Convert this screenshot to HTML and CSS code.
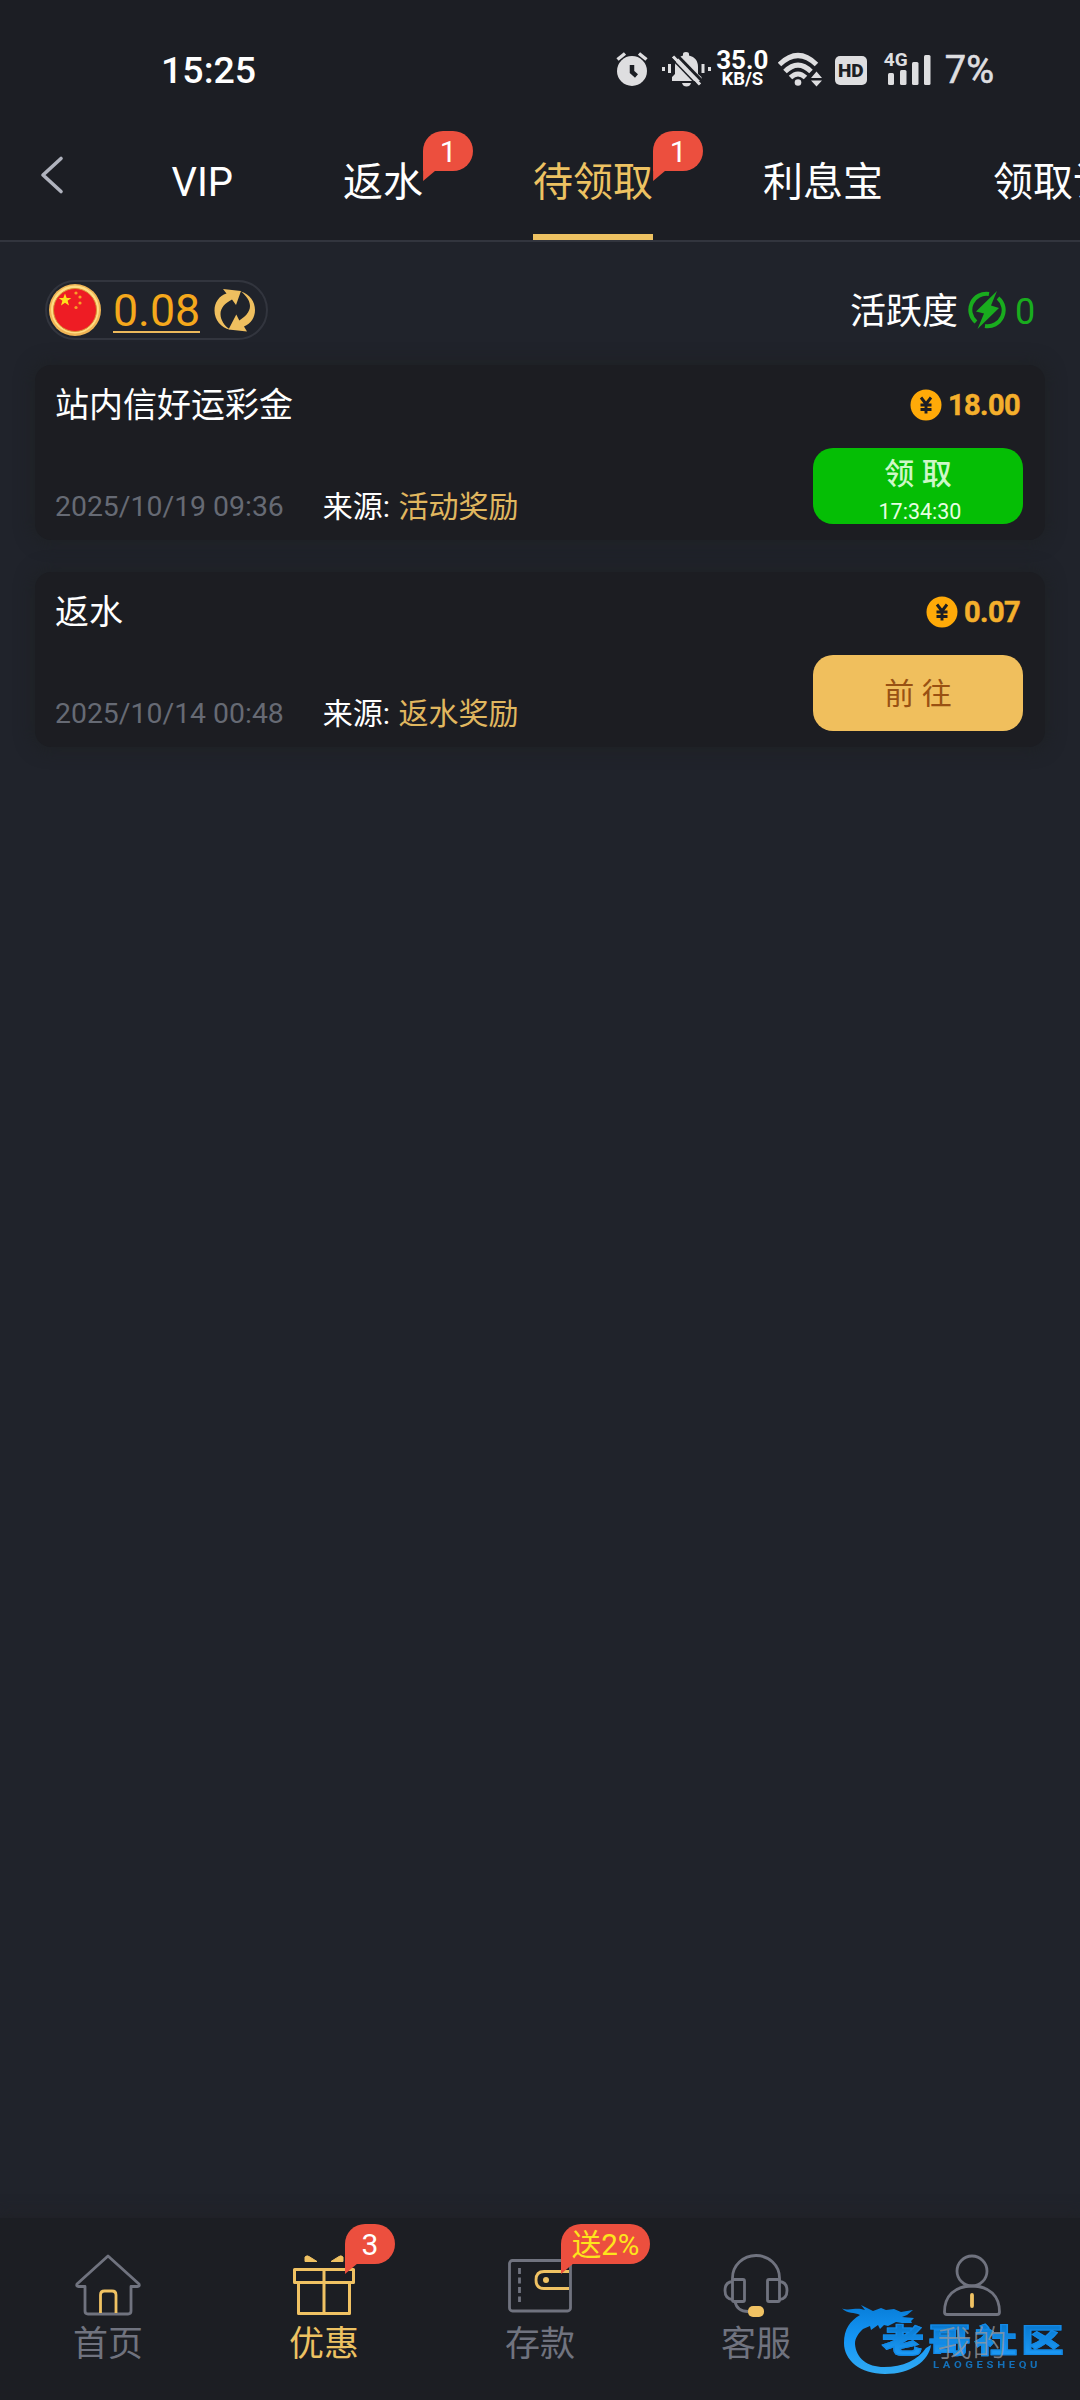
FILE: index.html
```html
<!DOCTYPE html>
<html lang="zh-CN">
<head>
<meta charset="utf-8">
<title>待领取</title>
<link rel="stylesheet" href="styles.css">
</head>
<body>
<div class="app">
  <header class="header">
    <div class="status">
      <span class="clock">15:25</span>
      <div class="status-icons">
        <svg class="i-alarm" width="32" height="36" viewBox="0 0 32 36"><circle cx="16" cy="20" r="15" fill="#dedee0"/><path d="M1.500 8.500L9 2.500M30.500 8.500L23 2.500" stroke="#dedee0" stroke-width="3.500"/><path d="M16 14v7l4.500 4" fill="none" stroke="#1c1e24" stroke-width="4.500"/></svg>
        <svg class="i-bell" width="49" height="36" viewBox="0 0 49 36"><g fill="#dedee0"><path d="M10 30v-4l3-3v-7c0-6 3-10 8-11.500V3q0-2 3-2t3 2v1.500C33 6 36 10 36 16v7l3.500 3v4z"/><path d="M20 32h9q-1 3.500-4.500 3.500T20 32z"/><path d="M6 13h3v9H6zM0 16h3v4H0zM39.500 13h3v9h-3zM46 16h3v4h-3z"/></g><path d="M14 3l28 29" stroke="#1c1e24" stroke-width="3"/><path d="M11 5.500l27 28" stroke="#dedee0" stroke-width="3.200"/><path d="M8.500 6.500l25 26" stroke="#1c1e24" stroke-width="1.500"/></svg>
        <div class="speed"><b>35.0</b><small>KB/S</small></div>
        <svg class="i-wifi" width="45" height="36" viewBox="0 0 45 36"><g fill="none" stroke="#dedee0" stroke-width="5"><path d="M1.500 13.500Q20-4.500 38.500 13.500"/><path d="M7 20.500Q20 7.500 33 20.500"/><path d="M12.500 26.500Q20 19.500 27.500 26.500"/></g><circle cx="20" cy="31.500" r="3.300" fill="#dedee0"/><path d="M33 27l5.500-6.500L44 27zM33 29.500h11L38.500 35.500z" fill="#dedee0"/></svg>
        <span class="hd">HD</span>
        <div class="signal">
          <svg width="48" height="34" viewBox="0 0 48 34" fill="#dedee0"><rect x="4" y="21" width="6" height="12" rx="1.500"/><rect x="16" y="18" width="6.500" height="15" rx="1.500"/><rect x="28" y="10" width="6.500" height="23" rx="1.500"/><rect x="40" y="3" width="6.500" height="30" rx="1.500"/></svg>
          <span class="net">4G</span>
        </div>
        <span class="battery">7%</span>
      </div>
    </div>
    <nav class="tabs">
      <svg class="back" width="24" height="40" viewBox="0 0 24 40"><path d="M21 3.500L3 20l18 16.500" fill="none" stroke="#b0b3be" stroke-width="3.600" stroke-linecap="round" stroke-linejoin="round"/></svg>
      <div class="tab-list">
        <span class="tab">VIP</span>
        <span class="tab">返水<i class="badge">1</i></span>
        <span class="tab active">待领取<i class="badge">1</i></span>
        <span class="tab">利息宝</span>
        <span class="tab">领取记录</span>
      </div>
    </nav>
  </header>

  <main class="main">
    <div class="summary">
      <div class="wallet">
        <svg width="54" height="54" viewBox="0 0 54 54"><circle cx="27" cy="27" r="26" fill="#f0b555"/><circle cx="27" cy="26.500" r="24" fill="#ffdd83"/><circle cx="27" cy="27" r="21.500" fill="#ee1c24" stroke="#d98d32" stroke-width="1"/><path d="M17 10.500l1.700 4.400h4.600l-3.700 2.900 1.400 4.600-4-2.700-4 2.700 1.400-4.600-3.700-2.900h4.600z" fill="#ffe01d"/><g fill="#f8a027"><circle cx="28" cy="10" r="1.600"/><circle cx="32" cy="14" r="1.600"/><circle cx="32" cy="20" r="1.600"/><circle cx="28" cy="24.500" r="1.600"/></g></svg>
        <span class="balance">0.08</span>
        <svg class="refresh" width="42" height="44" viewBox="0 0 42 44" fill="#efbf5f"><path d="M16 41.500C7 40 .5 32 .5 22.500.5 14.500 5 8 12.500 5.500L9 1l18 2-5 14-4-5.500C11 15 6.500 20 6.500 26c0 6 4 12 9.500 15.500z"/><path d="M27 3.500c9 3 14 10 14 18.500 0 7.500-4 13.500-11 16.500l3 5-18.500-2 7.800-15 3 6C31 29 36 24 36 18c0-5.500-4-10.500-9-14.500z"/></svg>
      </div>
      <div class="activity">
        <span>活跃度</span>
        <svg width="38" height="38" viewBox="0 0 38 38"><g fill="none" stroke="#19ac1e" stroke-width="4"><path d="M21 3A16 16 0 0 0 8 31"/><path d="M30 7a16 16 0 0 1-13 28"/></g><path d="M29 0L8 20.500l8 2L9.500 38 31 17l-8-2.500z" fill="#19ac1e"/></svg>
        <span class="points">0</span>
      </div>
    </div>

    <section class="card">
      <div class="row">
        <h2>站内信好运彩金</h2>
        <div class="amount"><svg width="32" height="32" viewBox="0 0 32 32"><circle cx="16" cy="16" r="15.500" fill="#ffaa08"/><path d="M11 8.500l5 6.500 5-6.500M10.500 16h11M10.500 20.500h11M16 15v9.500" fill="none" stroke="#1c1e24" stroke-width="2.900"/></svg><b>18.00</b></div>
      </div>
      <div class="row bottom">
        <div class="meta"><time>2025/10/19 09:36</time><span>来源: <em>活动奖励</em></span></div>
        <button class="btn claim"><span>领 取</span><small>17:34:30</small></button>
      </div>
    </section>

    <section class="card">
      <div class="row">
        <h2>返水</h2>
        <div class="amount"><svg width="32" height="32" viewBox="0 0 32 32"><circle cx="16" cy="16" r="15.500" fill="#ffaa08"/><path d="M11 8.500l5 6.500 5-6.500M10.500 16h11M10.500 20.500h11M16 15v9.500" fill="none" stroke="#1c1e24" stroke-width="2.900"/></svg><b>0.07</b></div>
      </div>
      <div class="row bottom">
        <div class="meta"><time>2025/10/14 00:48</time><span>来源: <em>返水奖励</em></span></div>
        <button class="btn go"><span>前 往</span></button>
      </div>
    </section>
  </main>

  <footer class="nav">
    <div class="item">
      <svg width="68" height="64" viewBox="0 0 68 64" fill="none" stroke="#70737f" stroke-width="2.800" stroke-linejoin="round"><path d="M34 3L3 31q-1 2.500 1.500 2.500H11V58q0 3 3 3h40q3 0 3-3V33.500h6.500Q66 33.500 65 31z"/><path d="M26.500 60V42q0-4 4-4h7.500q4 0 4 4v18" stroke="#f0c263"/></svg>
      <span>首页</span>
    </div>
    <div class="item active">
      <svg width="68" height="64" viewBox="0 0 68 64" fill="none" stroke="#f0c263" stroke-width="3" stroke-linejoin="round"><path d="M4.500 16.500h59v13h-59zM8.500 29.500h51v31h-51zM34 16.500v44"/><path d="M15 8.500V4q2-2 4-.5l8 5zM53 8.500V4q-2-2-4-.5l-8 5z" fill="#f0c263" stroke-width="1"/></svg>
      <i class="badge">3</i>
      <span>优惠</span>
    </div>
    <div class="item">
      <svg width="68" height="64" viewBox="0 0 68 64" fill="none" stroke="#70737f" stroke-width="2.800"><rect x="3.500" y="7.500" width="61" height="50.500" rx="3"/><path d="M13.500 15v34" stroke-dasharray="6 3.500"/><path d="M63 18.500H38q-8 0-8 8.500t8 8.500h25" stroke="#f0c263"/><circle cx="40" cy="27" r="3" fill="#f0c263" stroke="none"/></svg>
      <i class="badge promo">送2%</i>
      <span>存款</span>
    </div>
    <div class="item">
      <svg width="68" height="64" viewBox="0 0 68 64" fill="none" stroke="#70737f" stroke-width="2.800" stroke-linejoin="round"><path d="M10.500 27V25a23.500 22.500 0 0 1 47 0v2"/><rect x="10.500" y="26.500" width="12" height="22" rx="1.500"/><rect x="45.500" y="26.500" width="12" height="22" rx="1.500"/><path d="M10.500 28.500C5 29 3 33 3 37.500s2 8.500 7.500 9M57.500 28.500C63 29 65 33 65 37.500s-2 8.500-7.500 9M13 48.500q2 10 13 10"/><rect x="26" y="53" width="16" height="11" rx="5" fill="#f0c263" stroke="none"/></svg>
      <span>客服</span>
    </div>
    <div class="item profile">
      <svg width="68" height="64" viewBox="0 0 68 64" fill="none" stroke="#70737f" stroke-width="2.800" stroke-linejoin="round"><circle cx="34" cy="18" r="15"/><path d="M6.500 59c0-16 10-26 27.500-26s27.500 10 27.500 26q0 2.500-2.500 2.500H9q-2.500 0-2.500-2.500z"/><path d="M34 42v11" stroke="#f0c263" stroke-width="3.800" stroke-linecap="round"/></svg>
      <span>我的</span>
    </div>
    <div class="mark">
      <svg width="92" height="76" viewBox="0 0 92 76"><defs><linearGradient id="blue" x1="0" y1="0" x2="0" y2="1"><stop offset="0" stop-color="#087dd8"/><stop offset=".5" stop-color="#1597f7"/><stop offset="1" stop-color="#31aaf2"/></linearGradient></defs><path fill="url(#blue)" d="M1 5.500C8 8 13 5 20 6l4 1-4-5 12 6 8-3 5 2 8-1 7 3 12-2-6 5-5 2 12 1-3 3 1 2-10 0-6-1-8 4-4-1-4 4-2-4-7 5-1-4-7 3C17 31 14 35 14 41c1 14 12 23 29 23 19 0 34-7 42-19l5-3C88 58 70 71 44 71 19 71 3 57 3 40 3 26 9 18 19 12 13 9 7 11 1 5.500z"/></svg>
      <b>老哥社区</b>
      <small>LAOGESHEQU</small>
    </div>
  </footer>
</div>
</body>
</html>
```
FILE: styles.css
```css
* { box-sizing: border-box; }
body {
  margin: 0;
  background: #20232b;
  color: #fff;
  font-family: Roboto, "Noto Sans CJK SC", sans-serif;
}
i, em { font-style: normal; }
svg { display: block; flex: none; }
.app {
  width: 1080px;
  height: 2400px;
  display: flex;
  flex-direction: column;
  overflow: hidden;
}

/* Header */
.header {
  height: 242px;
  background: #1c1e24;
  border-bottom: 2px solid #32353e;
}
.status {
  height: 110px;
  padding: 30px 86px 0 161px;
  display: flex;
  justify-content: space-between;
  align-items: flex-start;
}
.clock {
  font-size: 37.500px;
  line-height: 80px;
  font-weight: 500;
}
.status-icons {
  height: 78px;
  display: flex;
  align-items: center;
  color: #dedee0;
}
.i-bell { margin-left: 14px; }
.speed {
  width: 53px;
  margin-left: 5px;
  display: flex;
  flex-direction: column;
  align-items: center;
  color: #fff;
}
.speed b { font-size: 26px; line-height: 20px; font-weight: 700; }
.speed small { font-size: 18.500px; line-height: 18px; font-weight: 700; }
.i-wifi { margin-left: 9px; }
.hd {
  width: 32px;
  height: 29px;
  margin: 3px 0 0 12px;
  border-radius: 5px;
  background: #dedee0;
  color: #1c1e24;
  font-size: 19px;
  line-height: 29px;
  font-weight: 900;
  text-align: center;
}
.signal { position: relative; margin-left: 17px; }
.net {
  position: absolute;
  left: 0;
  top: 0;
  font-size: 19px;
  line-height: 16px;
  font-weight: 700;
  background: #1c1e24;
}
.battery { margin-left: 13px; padding-top: 2px; font-size: 38px; line-height: 76px; -webkit-text-stroke: .6px #dedee0; }
.tabs { height: 130px; display: flex; overflow: hidden; }
.back { margin: 45px 0 0 40px; }
.tab-list {
  margin-left: 108px;
  display: flex;
  gap: 110px;
  font-size: 40px;
  line-height: 146px;
  white-space: nowrap;
}
.tab { position: relative; left: -.5px; height: 130px; }
.tab.active { color: #edc262; border-bottom: 6px solid #edc262; }
.badge {
  position: absolute;
  left: 100%;
  top: 21px;
  min-width: 50px;
  height: 40px;
  border-radius: 20px 20px 20px 0;
  background: #ec4f3e;
  color: #fff;
  font-size: 30px;
  line-height: 41px;
  text-align: center;
}
.badge::after {
  content: "";
  position: absolute;
  left: 0;
  top: 39px;
  width: 13px;
  height: 11px;
  background: #ec4f3e;
  clip-path: polygon(0 0, 100% 0, 0 100%);
}

/* Content */
.main { flex: 1; padding: 38px 35px 0; }
.summary {
  height: 60px;
  margin-bottom: 25px;
  padding: 0 10px;
  display: flex;
  justify-content: space-between;
  align-items: center;
}
.wallet {
  width: 223px;
  height: 60px;
  padding-left: 1px;
  border: 2px solid #32353e;
  border-radius: 30px;
  display: flex;
  align-items: center;
}
.balance {
  height: 44px;
  margin: 2px 0 0 11px;
  border-bottom: 2.500px solid #edb95b;
  color: #f5a81c;
  font-size: 44.700px;
  line-height: 44px;
}
.refresh { margin-left: 14px; }
.activity { display: flex; align-items: center; font-size: 36px; line-height: 60px; }
.activity span { padding-top: 3px; }
.activity svg { margin-left: 10px; }
.points { width: 20px; margin-left: 9px; color: #19ac1e; }
.card {
  height: 175px;
  margin-bottom: 32px;
  padding: 0 22px 16px 20px;
  border-radius: 16px;
  background: #1c1d22;
  box-shadow: 0 0 16px 4px rgba(29, 33, 34, .65);
  display: flex;
  flex-direction: column;
  justify-content: space-between;
}
.row { display: flex; justify-content: space-between; }
.row h2 { margin: 0; font-size: 34px; line-height: 80px; font-weight: 400; }
.amount {
  height: 80px;
  padding-right: 3px;
  display: flex;
  align-items: center;
  gap: 6px;
  color: #f4af2c;
  font-size: 29px;
  letter-spacing: -.6px;
}
.amount b { -webkit-text-stroke: .5px #f4af2c; }
.bottom { height: 76px; }
.meta { display: flex; align-items: flex-end; gap: 39px; font-size: 30px; line-height: 34px; }
.meta time { color: #666a74; font-size: 28.400px; }
.meta em { margin-left: 1px; color: #e0b75f; }
.btn {
  width: 210px;
  height: 76px;
  padding: 0;
  border: 0;
  border-radius: 20px;
  display: flex;
  flex-direction: column;
  align-items: center;
  font-family: inherit;
  font-size: 30px;
}
.claim { background: #05be05; color: #cdf8c8; }
.claim span { line-height: 52px; font-weight: 500; }
.claim small { padding-left: 4px; font-size: 21.500px; line-height: 24px; color: #e6ffe2; }
.go { background: #f0bf5d; color: #995113; }
.go span { line-height: 78px; }

/* Bottom navigation */
.nav {
  position: relative;
  height: 182px;
  background: #1c1e23;
  box-shadow: 0 0 14px 3px #212226;
  display: grid;
  grid-template-columns: repeat(5, 1fr);
}
.item {
  position: relative;
  padding-top: 35px;
  display: flex;
  flex-direction: column;
  align-items: center;
  color: #70737f;
  font-size: 35px;
  line-height: 56px;
}
.item.active { color: #edc262; }
.item .badge { left: 129px; top: 6px; }
.item .promo { min-width: 89px; font-size: 29.500px; line-height: 42px; color: #fde51c; }
.profile { z-index: 2; }
.profile span { font-weight: 300; color: rgba(148, 151, 158, .8); }
.mark {
  position: absolute;
  left: 841px;
  top: 85px;
  z-index: 1;
  width: 224px;
  height: 76px;
}
.mark b {
  position: absolute;
  left: 41px;
  top: 21px;
  font-size: 32px;
  line-height: 34px;
  font-weight: 900;
  white-space: nowrap;
  letter-spacing: 3.500px;
  transform: scaleX(1.310);
  transform-origin: left;
  background: linear-gradient(#0878ce, #1e9df9);
  -webkit-background-clip: text;
  background-clip: text;
  color: transparent;
  -webkit-text-stroke: 1.200px #1389e6;
}
.mark small {
  position: absolute;
  left: 92px;
  top: 57px;
  font-size: 9.500px;
  line-height: 9px;
  font-weight: 700;
  letter-spacing: 3.100px;
  transform: scaleX(1.180);
  transform-origin: left;
  color: #1470b8;
}
```
